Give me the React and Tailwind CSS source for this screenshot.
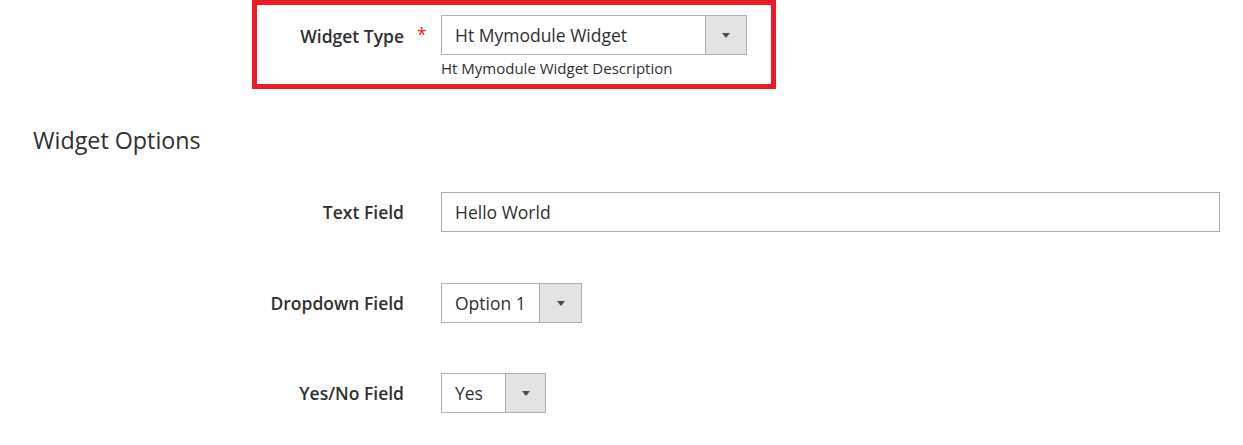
import React from "react";

const font = { fontFamily: '"Open Sans", "Liberation Sans", sans-serif' };

// little down-pointing caret used by the select buttons
const Caret = () => (
  <span className="block h-0 w-0 border-l-[4px] border-r-[4px] border-t-[5px] border-l-transparent border-r-transparent border-t-[#514943]" />
);

const Select = ({ value, width, btn = 41 }) => (
  <div
    className="flex h-[40px] border border-[#adadad] bg-white"
    style={{ width }}
  >
    <div className="flex flex-1 items-center pl-[13px] text-[17.5px] text-[#303030]">{value}</div>
    <div
      className="flex items-center justify-center border-l border-[#adadad] bg-[#e3e3e3]"
      style={{ width: btn }}
    >
      <Caret />
    </div>
  </div>
);

const Row = ({ label, children, className = "" }) => (
  <div className={`flex items-center ${className}`}>
    <div className="w-[404px] shrink-0 text-right text-[17.5px] font-semibold text-[#303030]">{label}</div>
    <div className="ml-[37px]">{children}</div>
  </div>
);

export default function App() {
  return (
    <div className="h-[445px] w-[1243px] overflow-hidden bg-white" style={font}>
      {/* required widget type, outlined */}
      <div className="ml-[252px] flex h-[89px] w-[524px] border-[5px] border-[#ed1c24] pt-[10px]">
        <div className="w-[147px] shrink-0 pt-[11px] text-right text-[17.5px] font-semibold leading-[20px] text-[#303030]">
          Widget Type
        </div>
        <div className="w-[37px] shrink-0 pl-[13px] pt-[9px] text-[17.5px] leading-[20px] text-[#e22626]">*</div>
        <div>
          <Select value="Ht Mymodule Widget" width={306} btn={41} />
          <div className="mt-[4px] text-[15px] leading-[18px] text-[#303030]">Ht Mymodule Widget Description</div>
        </div>
      </div>

      <h2 className="ml-[33px] mt-[36px] text-[23.3px] font-normal leading-[30px] text-[#303030]">Widget Options</h2>

      <Row label="Text Field" className="mt-[37px]">
        <div className="flex h-[40px] w-[779px] items-center border border-[#adadad] bg-white pl-[13px] text-[17.5px] text-[#303030]">
          Hello World
        </div>
      </Row>

      <Row label="Dropdown Field" className="mt-[51px]">
        <Select value="Option 1" width={141} btn={42} />
      </Row>

      <Row label="Yes/No Field" className="mt-[50px]">
        <Select value="Yes" width={105} btn={40} />
      </Row>
    </div>
  );
}
